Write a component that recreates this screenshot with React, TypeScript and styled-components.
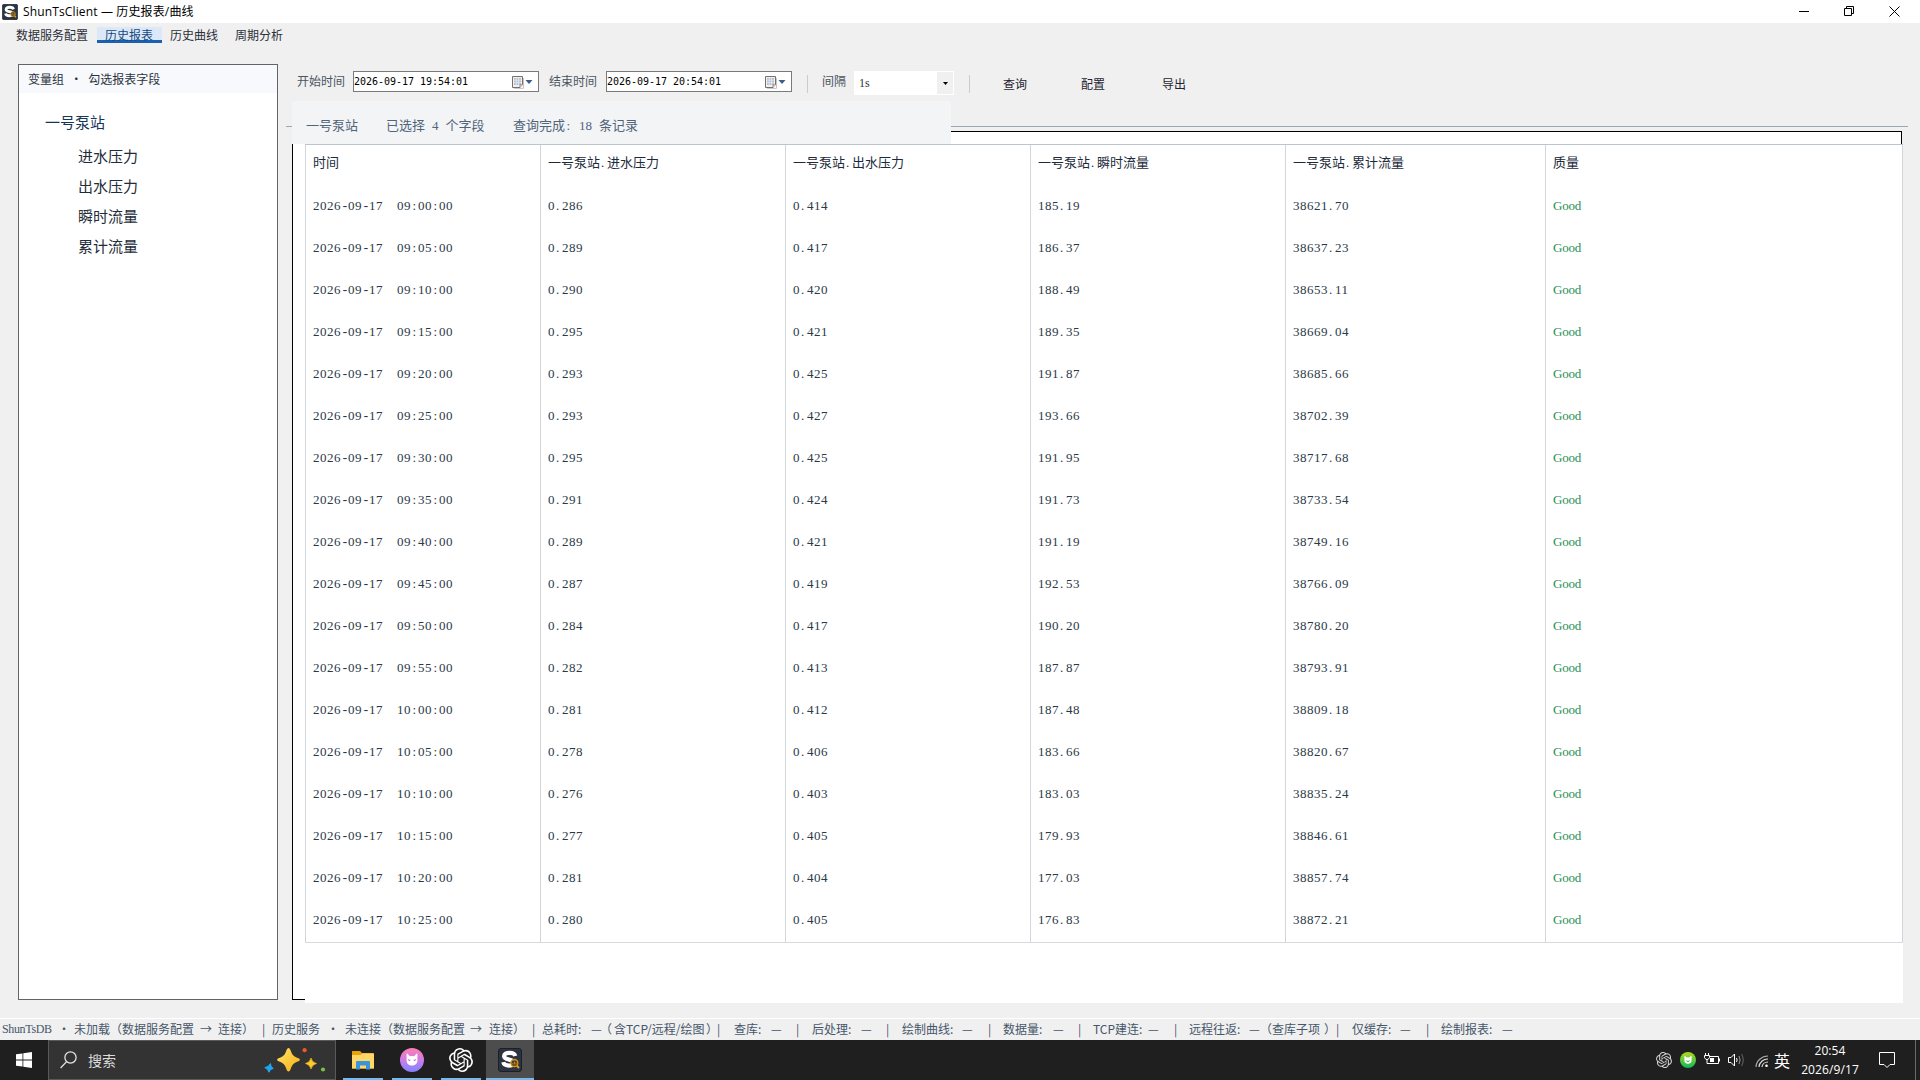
import React from "react";
import styled, { createGlobalStyle } from "styled-components";
import { SiOpenai } from "react-icons/si";

const cjk = `"Noto Sans CJK SC", sans-serif`;
const ui = `"Open Sans", ${cjk}`;
const mono = `"Liberation Mono", "Noto Sans CJK SC", monospace`;
const song = `"Liberation Serif", "Noto Sans CJK SC", serif`;

const Global = createGlobalStyle`
  * { box-sizing: border-box; }
  body { margin: 0; background: #f0f0f0; overflow: hidden; }
`;

const Desktop = styled.div`
  width: 1920px;
  height: 1080px;
  display: flex;
  flex-direction: column;
  background: #f0f0f0;
  font: 400 12px/16px ${cjk};
  color: #2b3440;
  white-space: pre;
  overflow: hidden;
`;

/* ---------- title bar ---------- */
const TitleBar = styled.header`
  height: 23px;
  flex: none;
  display: flex;
  align-items: center;
  background: #fff;
  padding: 0 20px 0 2px;
`;
const Title = styled.h1`
  flex: 1;
  margin: 0 0 0 5px;
  font: 400 12px/20px ${ui};
  letter-spacing: 0.14px;
  color: #000;
`;
const WindowButtons = styled.div`
  display: flex;
  gap: 35px;
  align-items: center;
  height: 21px;
`;

/* ---------- tabs ---------- */
const Tabs = styled.nav`
  height: 41px;
  flex: none;
  display: flex;
  padding: 4px 0 0 8px;
`;
const Tab = styled.a<{ $active?: boolean; $width: number }>`
  width: ${(p) => p.$width}px;
  height: 16px;
  padding-left: 8px;
  line-height: 16px;
  color: ${(p) => (p.$active ? "#174a82" : "#2b2f38")};
  background: ${(p) => (p.$active ? "#dce8f8" : "transparent")};
  box-shadow: ${(p) => (p.$active ? "inset 0 -3px 0 #1a62b0" : "none")};
`;

/* ---------- body ---------- */
const Body = styled.main`
  flex: 1;
  display: flex;
  gap: 8px;
  padding-left: 18px;
  min-height: 0;
`;
const GroupPanel = styled.aside`
  width: 260px;
  height: 936px;
  background: #fff;
  border: 1px solid #646464;
`;
const GroupTitle = styled.div`
  height: 28px;
  padding-left: 9px;
  background: #f8f9fd;
  line-height: 27px;
  word-spacing: 0.4px;
`;
const Tree = styled.ul`
  list-style: none;
  margin: 14px 0 0;
  padding: 0;
  font-size: 15px;
  line-height: 30px;
`;
const Node = styled.li<{ $root?: boolean }>`
  padding-left: ${(p) => (p.$root ? 26 : 59)}px;
  height: ${(p) => (p.$root ? 34 : 30)}px;
  color: ${(p) => (p.$root ? "#17365a" : "#1f2d3a")};
`;

const Report = styled.section`
  flex: 1;
  display: flex;
  flex-direction: column;
`;
const Toolbar = styled.div`
  height: 37px;
  display: flex;
  align-items: flex-start;
  padding: 7px 0 0 11px;
`;
const Label = styled.label<{ $width: number }>`
  width: ${(p) => p.$width}px;
  line-height: 20px;
  color: #4b5563;
`;
const DateField = styled.div`
  width: 186px;
  height: 21px;
  display: flex;
  align-items: center;
  background: #fff;
  border: 1px solid #7a7a7a;
  margin-right: 10px;
  padding-right: 5px;
`;
const DateText = styled.span`
  flex: 1;
  font: 400 10px/18px "DejaVu Sans Mono", monospace;
  letter-spacing: -0.02px;
  color: #000;
`;
const Divider = styled.i<{ $gap: number }>`
  width: 1px;
  height: 18px;
  margin: 4px ${(p) => p.$gap}px 0 5px;
  background: #c9cdd2;
`;
const Select = styled.div`
  width: 100px;
  height: 24px;
  display: flex;
  background: #fff;
  padding: 1px 1px 1px 5px;
  margin-right: 10px;
  font: 400 12px/23px ${song};
  justify-content: space-between;
`;
const SelectButton = styled.span`
  width: 16px;
  height: 22px;
  display: grid;
  place-items: center;
  background: #f0f0f0;
`;
const Action = styled.button<{ $width: number }>`
  width: ${(p) => p.$width}px;
  border: 0;
  padding: 0;
  background: none;
  text-align: left;
  font: 400 12px/26px ${cjk};
  color: #1f2430;
`;

const Summary = styled.div`
  height: 43px;
  display: flex;
`;
const Tick = styled.i`
  width: 6px;
  height: 26px;
  border-bottom: 1px solid #9aa5b5;
`;
const SummaryText = styled.div`
  width: 659px;
  display: flex;
  padding: 8px 0 0 14px;
  background: #f3f4f6;
  color: #50647a;
  font: 400 13px/34px ${song};
`;
const SummaryItem = styled.span<{ $width: number }>`
  width: ${(p) => p.$width}px;
  word-spacing: 3.75px;
`;
const FrameTop = styled.div`
  width: 957px;
  padding-top: 25px;
`;
const Rule = styled.div`
  height: 1px;
  background: #9aa5b8;
  margin-bottom: 4px;
`;
const FrameEdge = styled.div`
  width: 951px;
  height: 13px;
  background: #fff;
  border: solid #000;
  border-width: 1px 1px 0 0;
`;

const Content = styled.div`
  display: flex;
  padding-left: 6px;
`;
const FrameLeft = styled.div`
  width: 13px;
  height: 856px;
  background: #fff;
  border: solid #000;
  border-width: 0 0 1px 1px;
`;
const Sheet = styled.div`
  width: 1598px;
  height: 859px;
  background: #fff;
`;
const Table = styled.div`
  height: 799px;
  display: grid;
  grid-template-columns: 235px 245px 245px 255px 260px 358px;
  border-top: 1px solid #bcc5ce;
  border-bottom: 1px solid #d6dade;
`;
const Column = styled.div<{ $last?: boolean }>`
  border-left: 1px solid #d2d5da;
  border-right: ${(p) => (p.$last ? "1px solid #d2d5da" : "0")};
  padding-left: 7px;
`;
const HeadCell = styled.div`
  height: 40px;
  font: 400 13px/35px ${song};
  color: #1c2a3a;
`;
const Cell = styled.div<{ $good?: boolean }>`
  height: 42px;
  font: 400 13px/41px ${song};
  letter-spacing: ${(p) => (p.$good ? -0.2 : 0.5)}px;
  color: ${(p) => (p.$good ? "#1f8f55" : "#2b3846")};
`;
/* Punctuation keeps the same 7px advance as the digits around it. */
const Dot = styled.span<{ $before?: number }>`
  margin-left: ${(p) => p.$before ?? 0}px;
  letter-spacing: ${(p) => 3.75 - (p.$before ?? 0)}px;
`;
const Colon = styled.span`
  margin-left: 1.5px;
  letter-spacing: 1.89px;
`;
const Hyphen = styled.span`
  font-family: ${mono};
  letter-spacing: -0.8px;
`;

const Digits = ({ text }: { text: string }) => (
  <>
    {text.split(/([-.: ])/).map((part, i) => {
      if (part === "-") return <Hyphen key={i}>-</Hyphen>;
      if (part === ":") return <Colon key={i}>:</Colon>;
      if (part === "." || part === " ") return <Dot key={i} $before={part === "." ? 1 : 0}>{part}</Dot>;
      return part;
    })}
  </>
);

/* ---------- status bar ---------- */
const StatusBar = styled.footer`
  height: 22px;
  flex: none;
  display: flex;
  border-top: 1px solid #fff;
  padding-left: 2px;
  font: 400 12px/19px ${cjk};
  color: #46566a;
`;
const Status = styled.span<{ $width: number; $latin?: boolean }>`
  width: ${(p) => p.$width}px;
  flex: none;
  ${(p) => p.$latin && `font: 400 12px/20px ${song}; letter-spacing: -0.35px;`}
`;

/* ---------- taskbar ---------- */
const Taskbar = styled.div`
  height: 40px;
  flex: none;
  display: flex;
  background: #1f1f1f;
  color: #fff;
`;
const Start = styled.div`
  width: 48px;
  display: grid;
  place-items: center;
`;
const Search = styled.div`
  width: 288px;
  height: 40px;
  display: flex;
  align-items: center;
  padding: 0 7px 0 11px;
  background: #333;
  border: 1px solid #5a5a5a;
  font: 400 14px/36px ${cjk};
  color: #dcdcdc;
`;
const SearchText = styled.span`
  flex: 1;
  margin-left: 11px;
`;
const Apps = styled.div`
  flex: 1;
  display: flex;
  padding-left: 3px;
`;
const AppButton = styled.div<{ $active?: boolean }>`
  width: ${(p) => (p.$active ? 48 : 49)}px;
  height: 40px;
  display: grid;
  place-items: center;
  padding-right: ${(p) => (p.$active ? 0 : 1)}px;
  background-color: ${(p) => (p.$active ? "#4d4d4d" : "transparent")};
  background-image: linear-gradient(#76b9ed, #76b9ed);
  background-repeat: no-repeat;
  background-size: ${(p) => (p.$active ? 48 : 40)}px 2px;
  background-position: ${(p) => (p.$active ? 0 : 4)}px 38px;
`;
const Tray = styled.div`
  display: flex;
  align-items: center;
  gap: 8px;
`;
const Ime = styled.span`
  width: 17px;
  margin-left: -3px;
  font: 400 16px/34px ${cjk};
`;
const Clock = styled.div`
  width: 74px;
  margin: 0 2px 0 -6px;
  text-align: center;
  font: 400 12px/19px ${ui};
  letter-spacing: 0.1px;
`;
const Notice = styled.div`
  width: 39px;
  height: 40px;
  padding: 12px 0 0 2px;
  border-right: 1px solid #6a6a6a;
  margin-right: 4px;
`;

const AppLogo = ({ size }: { size: number }) => (
  <svg width={size} height={size} viewBox="0 0 24 24">
    <rect x="0.5" y="0.5" width="23" height="23" rx="2.5" fill="#2b3440" stroke="#1a2028" />
    <path
      d="M17.2 8C16.6 5.200 14.300 4.900 11.500 4.900C8.500 4.900 6.100 5.900 6.100 8.200C6.100 12.600 16 10.600 16 14.800C16 16.800 14 17.600 11.200 17.600C8 17.600 5.800 16.700 5.300 14.200"
      fill="none"
      stroke="#fff"
      strokeWidth="4.2"
    />
    <circle cx="16.400" cy="15" r="3.500" fill="#4a3f2a" stroke="#d9951c" strokeWidth="1.300" />
    <path d="M18.800 17.600L21 20" stroke="#e09a1c" strokeWidth="2" />
    <path d="M14.800 16.500v-1.500M16.400 16.500v-3M18 16.500v-2" stroke="#e09a1c" strokeWidth="0.800" />
  </svg>
);

const CalendarIcon = () => (
  <svg width="21" height="14" viewBox="0 0 21 14">
    <path d="M2 13.4H11.5V3" fill="none" stroke="#c9c3c0" />
    <path d="M0.5 1.5H10.5V9.5L8 12.5H0.5Z" fill="#eef1f6" stroke="#7d6b66" />
    <path d="M2 3h7v7H2z" fill="#b4bfd0" />
    <path d="M2 5.2h7M2 7.6h7M4.2 3v7M6.6 3v7" stroke="#eef1f6" strokeWidth="0.7" />
    <path d="M8 12.5V9.8h2.5" fill="#fff" stroke="#7d6b66" strokeWidth="0.8" />
    <path d="M13.5 5h7l-3.5 4z" fill="#3d5c8c" />
  </svg>
);

const Cat = ({ fill }: { fill: string }) => (
  <path
    fill={fill}
    d="M6.6 6.2C6.6 5.4 7.3 5.5 7.8 6L9.8 8.2Q12 7.7 14.2 8.2L16.2 6C16.7 5.5 17.4 5.4 17.4 6.2V12.6C17.4 15.9 15 17.6 12 17.6S6.6 15.9 6.6 12.6Z"
  />
);

const Sparkles = () => (
  <svg width="64" height="28" viewBox="264 1046 64 28">
    <defs>
      <linearGradient id="gold" x1="0" y1="0" x2="1" y2="1">
        <stop offset="0" stopColor="#ffe36a" />
        <stop offset="1" stopColor="#f7ae12" />
      </linearGradient>
    </defs>
    <path d="M288.500 1048Q290 1048 291 1051.500Q292.500 1056 296.500 1057.500Q300 1058.500 300 1059.700Q300 1061 296.500 1062Q292.500 1063.500 291 1068Q290 1071.500 288.500 1071.500Q287 1071.500 286 1068Q284.500 1063.500 280.500 1062Q277 1061 277 1059.700Q277 1058.500 280.500 1057.500Q284.500 1056 286 1051.500Q287 1048 288.500 1048Z" fill="url(#gold)" />
    <path d="M311 1058Q312 1062.500 316.500 1063.500Q312 1064.500 311 1069Q310 1064.500 305.500 1063.500Q310 1062.500 311 1058Z" fill="#ffc928" stroke="#ffc928" strokeWidth="0.6" />
    <path d="M270.500 1063.500L271 1066.300L273.300 1068.500L270.600 1069.500L269 1072.300L267.500 1069.500L264.800 1067.600L268 1066.500Z" fill="#1ea7ee" stroke="#1ea7ee" strokeLinejoin="round" />
    <circle cx="304.600" cy="1050.200" r="2.100" fill="#ee5a24" />
    <circle cx="323" cy="1069.500" r="2.100" fill="#7cc03c" />
  </svg>
);

const stamps = Array.from({ length: 18 }, (_, i) => {
  const t = 540 + i * 5;
  const pad = (n: number) => String(n).padStart(2, "0");
  return `2026-09-17  ${pad(Math.floor(t / 60))}:${pad(t % 60)}:00`;
});
const columns: { head: string; cells: string[] }[] = [
  { head: "时间", cells: stamps },
  {
    head: "一号泵站.进水压力",
    cells: "0.286 0.289 0.290 0.295 0.293 0.293 0.295 0.291 0.289 0.287 0.284 0.282 0.281 0.278 0.276 0.277 0.281 0.280".split(" "),
  },
  {
    head: "一号泵站.出水压力",
    cells: "0.414 0.417 0.420 0.421 0.425 0.427 0.425 0.424 0.421 0.419 0.417 0.413 0.412 0.406 0.403 0.405 0.404 0.405".split(" "),
  },
  {
    head: "一号泵站.瞬时流量",
    cells: "185.19 186.37 188.49 189.35 191.87 193.66 191.95 191.73 191.19 192.53 190.20 187.87 187.48 183.66 183.03 179.93 177.03 176.83".split(" "),
  },
  {
    head: "一号泵站.累计流量",
    cells: "38621.70 38637.23 38653.11 38669.04 38685.66 38702.39 38717.68 38733.54 38749.16 38766.09 38780.20 38793.91 38809.18 38820.67 38835.24 38846.61 38857.74 38872.21".split(" "),
  },
  { head: "质量", cells: stamps.map(() => "Good") },
];

const status: [string, number][] = [
  ["ShunTsDB", 56], ["·", 16], ["未加载", 36], ["（", 12], ["数据服务配置", 78], ["→", 18], ["连接", 24], ["）", 20],
  ["|", 10], ["历史服务", 55], ["·", 18], ["未连接", 36], ["（", 12], ["数据服务配置", 77], ["→", 19], ["连接", 24], ["）", 19],
  ["|", 10], ["总耗时:", 49], ["—", 9], ["（", 14], ["含TCP/远程/绘图", 92], ["）", 11],
  ["|", 17], ["查库:", 37], ["—", 25], ["|", 16], ["后处理:", 49], ["—", 25], ["|", 16], ["绘制曲线:", 60], ["—", 26],
  ["|", 15], ["数据量:", 50], ["—", 25], ["|", 15], ["TCP建连:", 55], ["—", 26], ["|", 15], ["远程往返:", 60], ["—", 11],
  ["（", 12], ["查库子项", 52], ["）", 12], ["|", 16], ["仅缓存:", 48], ["—", 26], ["|", 15], ["绘制报表:", 61], ["—", 20],
];

export default function App() {
  return (
    <Desktop>
      <Global />
      <TitleBar>
        <AppLogo size={16} />
        <Title>ShunTsClient — 历史报表/曲线</Title>
        <WindowButtons>
          <svg width="10" height="11"><path d="M0 5.5h10" stroke="#000" /></svg>
          <svg width="10" height="11"><path d="M.5 2.500h7v7h-7zM2.500 2.500v-2h7v7h-2" fill="none" stroke="#000" /></svg>
          <svg width="11" height="11"><path d="M.5.5l10 10M10.500.5l-10 10" stroke="#000" /></svg>
        </WindowButtons>
      </TitleBar>
      <Tabs>
        <Tab $width={89}>数据服务配置</Tab>
        <Tab $width={65} $active>历史报表</Tab>
        <Tab $width={65}>历史曲线</Tab>
        <Tab $width={65}>周期分析</Tab>
      </Tabs>
      <Body>
        <GroupPanel>
          <GroupTitle>变量组  ·  勾选报表字段</GroupTitle>
          <Tree>
            <Node $root>一号泵站</Node>
            <Node>进水压力</Node>
            <Node>出水压力</Node>
            <Node>瞬时流量</Node>
            <Node>累计流量</Node>
          </Tree>
        </GroupPanel>
        <Report>
          <Toolbar>
            <Label $width={56}>开始时间</Label>
            <DateField><DateText>2026-09-17 19:54:01</DateText><CalendarIcon /></DateField>
            <Label $width={57}>结束时间</Label>
            <DateField><DateText>2026-09-17 20:54:01</DateText><CalendarIcon /></DateField>
            <Divider $gap={14} />
            <Label $width={32}>间隔</Label>
            <Select>
              1s
              <SelectButton><svg width="5" height="3"><path d="M0 0h5L2.500 3z" /></svg></SelectButton>
            </Select>
            <Divider $gap={33} />
            <Action $width={78}>查询</Action>
            <Action $width={81}>配置</Action>
            <Action $width={40}>导出</Action>
          </Toolbar>
          <Summary>
            <Tick />
            <SummaryText>
              <SummaryItem $width={80}>一号泵站</SummaryItem>
              <SummaryItem $width={127}>已选择 4 个字段</SummaryItem>
              <SummaryItem $width={140}>查询完成<Colon>:</Colon> 18 条记录</SummaryItem>
            </SummaryText>
            <FrameTop>
              <Rule />
              <FrameEdge />
            </FrameTop>
          </Summary>
          <Content>
            <FrameLeft />
            <Sheet>
              <Table>
                {columns.map((c, i) => (
                  <Column key={c.head} $last={i === 5}>
                    <HeadCell><Digits text={c.head} /></HeadCell>
                    {c.cells.map((v, r) => (
                      <Cell key={r} $good={i === 5}><Digits text={v} /></Cell>
                    ))}
                  </Column>
                ))}
              </Table>
            </Sheet>
          </Content>
        </Report>
      </Body>
      <StatusBar>
        {status.map(([text, width], i) => (
          <Status key={i} $width={width} $latin={text === "ShunTsDB"}>{text}</Status>
        ))}
      </StatusBar>
      <Taskbar>
        <Start>
          <svg width="16" height="16" fill="#fff"><path d="M0 2.300L6.500 1.400V7.600H0zM7.300 1.300L16 0V7.600H7.300zM0 8.400H6.500V14.600L0 13.700zM7.300 8.400H16V16L7.300 14.700z" /></svg>
        </Start>
        <Search>
          <svg width="17" height="18" fill="none" stroke="#e4e4e4" strokeWidth="1.300"><circle cx="10.500" cy="6.500" r="5.600" /><path d="M6.600 10.600L.6 17" /></svg>
          <SearchText>搜索</SearchText>
          <Sparkles />
        </Search>
        <Apps>
          <AppButton>
            <svg width="22" height="20" viewBox="0 0 22 20">
              <path d="M0 1.500Q0 1 .6 1H8L10 3H21.500V18.500H0Z" fill="#e8a20c" />
              <path d="M0 5H8.500L10.500 3.500H22V18.500H0Z" fill="#ffd767" />
              <path d="M4 12Q4 11 5 11H17Q18 11 18 12V19.500H14V15.500H8V19.500H4Z" fill="#3a94dc" />
            </svg>
          </AppButton>
          <AppButton>
            <svg width="24" height="24" viewBox="0 0 24 24">
              <defs>
                <linearGradient id="cat" x1="0.500" y1="0" x2="0.500" y2="1">
                  <stop offset="0" stopColor="#ff7fae" />
                  <stop offset="0.500" stopColor="#cf7bea" />
                  <stop offset="1" stopColor="#7d84ff" />
                </linearGradient>
              </defs>
              <circle cx="12" cy="12" r="12" fill="url(#cat)" />
              <Cat fill="#fff" />
              <path d="M8.200 11.500l2 1.200M15.800 11.500l-2 1.200" stroke="#b56fe0" strokeWidth="1.200" />
            </svg>
          </AppButton>
          <AppButton><SiOpenai size={24} /></AppButton>
          <AppButton $active><AppLogo size={24} /></AppButton>
        </Apps>
        <Tray>
          <SiOpenai size={16} color="#d0d0d0" />
          <svg width="16" height="16" viewBox="0 0 24 24">
            <defs>
              <linearGradient id="green" x1="0.500" y1="0" x2="0.500" y2="1">
                <stop offset="0" stopColor="#b4d81c" />
                <stop offset="1" stopColor="#0cba5a" />
              </linearGradient>
            </defs>
            <circle cx="12" cy="12" r="12" fill="url(#green)" />
            <Cat fill="#fff" />
            <path d="M9.500 13Q12 16 14.500 13" stroke="#3fae4a" strokeWidth="1.500" fill="none" />
          </svg>
          <svg width="16" height="16" fill="none" stroke="#fff">
            <path d="M5 4.500H14.500V11.500H4.500M15.500 6.500v3" />
            <path d="M6 6h4v4H6z" fill="#fff" stroke="none" />
            <path d="M1.500 1v2.500M4.500 1v2.500M.5 3.500h5v2L4 7.500H2L.5 5.500zM3 7.500v4h2" />
          </svg>
          <svg width="17" height="16" fill="none" stroke="#fff">
            <path d="M.5 5.500H3L6.500 2v12L3 10.500H.5z" />
            <path d="M8.500 6Q9.700 8 8.500 10" />
            <path d="M11 4Q13.200 8 11 12" stroke="#999" />
            <path d="M13.500 2Q17 8 13.500 14" stroke="#666" />
          </svg>
          <svg width="16" height="16" fill="none" stroke="#ddd" strokeWidth="1.200">
            <path d="M3 15A12 11.500 0 0 1 15 4" stroke="#aaa" />
            <path d="M6 15A9 8.500 0 0 1 15 7" />
            <path d="M9 15A6 5.500 0 0 1 15 10" />
            <circle cx="13.500" cy="13.800" r="1.300" fill="#fff" stroke="none" />
          </svg>
          <Ime>英</Ime>
          <Clock>20:54{"\n"}2026/9/17</Clock>
          <Notice>
            <svg width="17" height="17" fill="none" stroke="#fff"><path d="M.5.5h15v12H11L8 15.500 5 12.500H.5z" /></svg>
          </Notice>
        </Tray>
      </Taskbar>
    </Desktop>
  );
}
